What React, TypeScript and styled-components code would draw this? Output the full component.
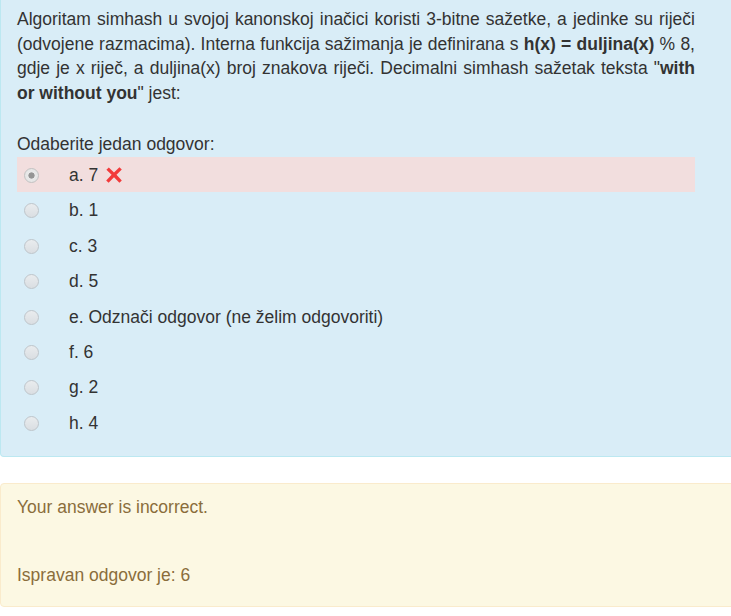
import React from "react";
import styled, { createGlobalStyle } from "styled-components";

const Global = createGlobalStyle`
  html, body {
    margin: 0;
    padding: 0;
    background: #ffffff;
    overflow: hidden;
  }
  body {
    font-family: "Liberation Sans", Arial, Helvetica, sans-serif;
    font-size: 17.5px;
    line-height: 25px;
    color: #333333;
  }
`;

const Page = styled.div`
  width: 731px;
  overflow: hidden;
`;

const Formulation = styled.div`
  box-sizing: border-box;
  width: 750px;
  background: #d9edf7;
  border: 1px solid #bce8f1;
  border-top: none;
  border-radius: 0 0 4px 4px;
  padding: 7.25px 54px 16px 16px;
  color: #333333;
`;

const QText = styled.p`
  margin: 0 0 26.25px 0;
  text-align: justify;
  line-height: 24.5px;
  width: 678px;
`;

const Prompt = styled.div`
  height: 25px;
`;

const Answers = styled.div`
  display: flex;
  flex-direction: column;
  width: 678px;
  margin-top: 0.5px;
`;

const Row = styled.div<{ $wrong?: boolean }>`
  box-sizing: border-box;
  display: flex;
  align-items: center;
  height: 35.4px;
  padding-top: 1.5px;
  background: ${(p) => (p.$wrong ? "#f2dede" : "transparent")};
`;

const Radio = styled.span<{ $checked?: boolean }>`
  box-sizing: border-box;
  flex: 0 0 auto;
  width: 15px;
  height: 15px;
  margin-left: 6.5px;
  border-radius: 50%;
  border: 1px solid ${(p) => (p.$checked ? "#c2c2c2" : "#bfc5ca")};
  background: ${(p) =>
    p.$checked
      ? "radial-gradient(circle, #959595 0, #959595 2.8px, #e9e9e9 3.4px, #e2e2e2 100%)"
      : "linear-gradient(to bottom, #e9ecee, #dadee2)"};
`;

const Label = styled.span`
  display: flex;
  align-items: center;
  margin-left: 30.5px;
  color: #333333;
`;

const Cross = styled.svg`
  margin-left: 6px;
  width: 20px;
  height: 20px;
`;

const Outcome = styled.div`
  box-sizing: border-box;
  width: 750px;
  margin-top: 26px;
  background: #fcf8e3;
  border: 1px solid #faebcc;
  border-radius: 4px;
  padding: 11px 16px 18px 16px;
  color: #8a6d3b;
`;

const Feedback = styled.div`
  height: 25px;
`;

const RightAnswer = styled.div`
  margin-top: 43px;
  height: 25px;
`;

const options = [
  { key: "a", text: "7", checked: true, wrong: true },
  { key: "b", text: "1" },
  { key: "c", text: "3" },
  { key: "d", text: "5" },
  { key: "e", text: "Odznači odgovor (ne želim odgovoriti)" },
  { key: "f", text: "6" },
  { key: "g", text: "2" },
  { key: "h", text: "4" },
];

export default function App() {
  return (
    <Page>
      <Global />
      <Formulation>
        <QText>
          Algoritam simhash u svojoj kanonskoj inačici koristi 3-bitne sažetke, a jedinke su riječi
          (odvojene razmacima). Interna funkcija sažimanja je definirana s{" "}
          <b>h(x) = duljina(x)</b> % 8, gdje je x riječ, a duljina(x) broj znakova riječi. Decimalni
          simhash sažetak teksta "<b>with or without you</b>" jest:
        </QText>
        <Prompt>Odaberite jedan odgovor:</Prompt>
        <Answers>
          {options.map((o) => (
            <Row key={o.key} $wrong={o.wrong}>
              <Radio $checked={o.checked} />
              <Label>
                {o.key}. {o.text}
                {o.wrong && (
                  <Cross viewBox="0 0 20 20">
                    <path
                      d="M2.4 4.8 L4.8 2.4 L10 7.4 L15.4 2.2 L17.8 4.6 L12.5 9.8 L17.8 15.4 L15.4 17.8 L10 12.3 L4.6 17.8 L2.2 15.4 L7.6 9.8 Z"
                      fill="#f23b3b"
                    />
                  </Cross>
                )}
              </Label>
            </Row>
          ))}
        </Answers>
      </Formulation>
      <Outcome>
        <Feedback>Your answer is incorrect.</Feedback>
        <RightAnswer>Ispravan odgovor je: 6</RightAnswer>
      </Outcome>
    </Page>
  );
}
